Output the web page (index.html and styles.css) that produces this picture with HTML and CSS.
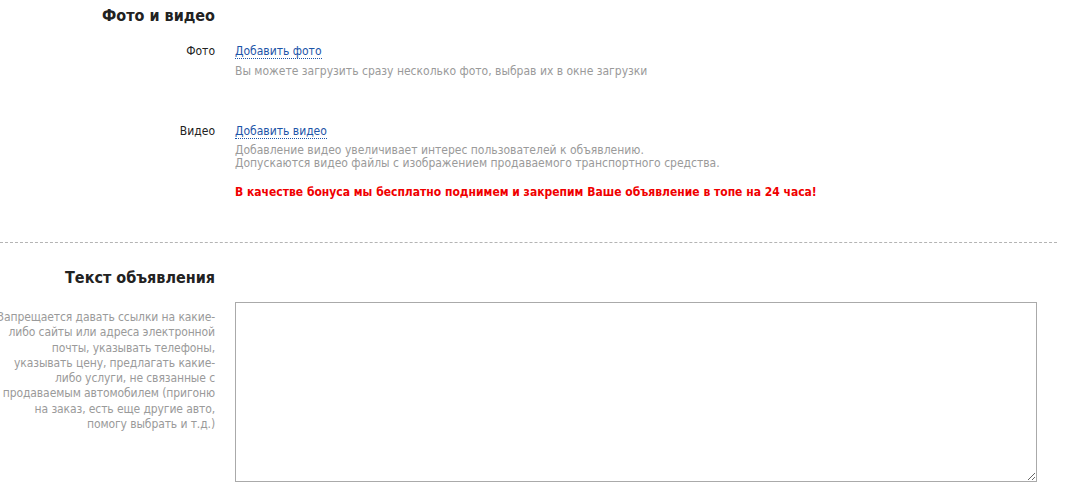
FILE: index.html
```html
<!DOCTYPE html>
<html lang="ru">
<head>
  <meta charset="UTF-8" />
  <title>Фото и видео</title>
  <link rel="stylesheet" href="styles.css">
</head>
<body>
  <div class="form">
    <div class="section">
      <div class="row head">
        <h2 class="label">Фото и видео</h2>
      </div>
      <div class="row">
        <div class="label">Фото</div>
        <div class="field">
          <a class="add" href="#">Добавить фото</a>
          <p class="hint">Вы можете загрузить сразу несколько фото, выбрав их в окне загрузки</p>
        </div>
      </div>
      <div class="row video">
        <div class="label">Видео</div>
        <div class="field">
          <a class="add" href="#">Добавить видео</a>
          <p class="hint">Добавление видео увеличивает интерес пользователей к объявлению.<br>Допускаются видео файлы с изображением продаваемого транспортного средства.</p>
          <p class="bonus">В качестве бонуса мы бесплатно поднимем и закрепим Ваше объявление в топе на 24 часа!</p>
        </div>
      </div>
    </div>

    <div class="section text-section">
      <div class="row head">
        <h2 class="label">Текст объявления</h2>
      </div>
      <div class="row">
        <div class="label note">Запрещается давать ссылки на какие-<br>либо сайты или адреса электронной<br>почты, указывать телефоны,<br>указывать цену, предлагать какие-<br>либо услуги, не связанные с<br>продаваемым автомобилем (пригоню<br>на заказ, есть еще другие авто,<br>помогу выбрать и т.д.)</div>
        <div class="field">
          <textarea class="text"></textarea>
        </div>
      </div>
    </div>
  </div>
</body>
</html>
```

FILE: styles.css
```css
body {
  margin: 0;
  background: #fff;
  font-family: Tahoma, "DejaVu Sans", sans-serif;
  font-stretch: condensed;
  font-size: 12px;
  color: #222;
  overflow: hidden;
}
.form {
  width: 1057px;
}
.section {
  padding-bottom: 42px;
  border-bottom: 1px dashed #b4b4b4;
}
.text-section {
  border-bottom: none;
  padding: 19px 0 0;
}
.row {
  display: flex;
  gap: 20px;
}
.label {
  width: 215px;
  flex-shrink: 0;
  text-align: right;
  line-height: 15px;
}
.head .label {
  margin: 6px 0 0;
  font-size: 16px;
  font-weight: bold;
  line-height: 20px;
  color: #222;
}
.section > .row:nth-child(2) {
  margin-top: 18px;
}
.field {
  flex: 1;
  line-height: 15px;
}
.add {
  color: #1d55a8;
  text-decoration: none;
  border-bottom: 1px dotted #1d55a8;
}
.hint {
  margin: 6px 0 0;
  color: #9a9a9a;
  line-height: 13px;
}
.video {
  margin-top: 46px;
}
.video .hint {
  margin-top: 5px;
}
.bonus {
  margin: 15px 0 0;
  color: #f00000;
  font-weight: bold;
}
.note {
  width: 230px;
  margin: 8px 0 0 -15px;
  color: #9a9a9a;
  line-height: 15.3px;
  white-space: nowrap;
  letter-spacing: -0.1px;
}
.text-section .row:nth-child(2) {
  margin-top: 14px;
}
.text {
  display: block;
  width: 802px;
  height: 180px;
  box-sizing: border-box;
  border: 1px solid #aaa;
  margin: 0;
}
```
